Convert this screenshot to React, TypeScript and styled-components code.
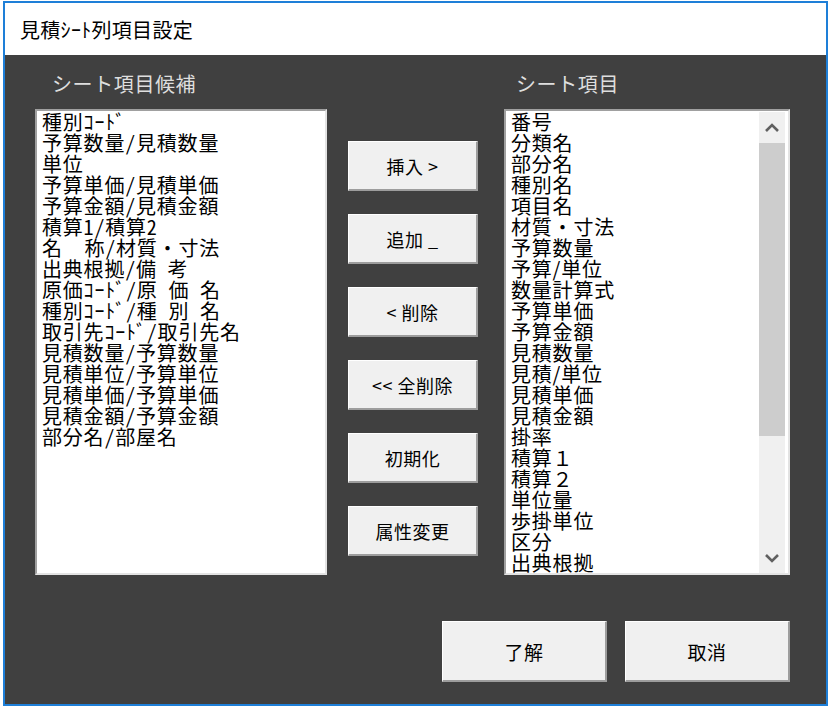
import styled, { createGlobalStyle } from 'styled-components'

const GlobalStyle = createGlobalStyle`
  html, body {
    margin: 0;
    padding: 0;
    background: #ffffff;
  }
  body {
    font-family: "Noto Sans CJK JP", "Noto Sans", sans-serif;
  }
`

const FONT = '"Noto Sans CJK JP", "Noto Sans", sans-serif'

const Window = styled.div`
  box-sizing: border-box;
  width: 825px;
  height: 705px;
  margin: 1px 0 0 3px;
  border: 2px solid #1e7fd8;
  display: flex;
  flex-direction: column;
  background: #404040;
`

const TitleBar = styled.div`
  height: 52px;
  flex: none;
  display: flex;
  align-items: center;
  padding-left: 15px;
  background: #ffffff;
  font-family: ${FONT};
  font-size: 20px;
  color: #000;
  letter-spacing: 0.3px;
`

const Body = styled.div`
  flex: 1;
  display: flex;
  flex-direction: column;
  padding: 14px 35px 0 30px;
`

const LabelRow = styled.div`
  display: flex;
  height: 30px;
  margin-bottom: 10px;
`

const Label = styled.div<{ $width: number; $indent: number }>`
  width: ${(p) => p.$width}px;
  padding-left: ${(p) => p.$indent}px;
  box-sizing: border-box;
  font-family: ${FONT};
  font-size: 20px;
  line-height: 30px;
  color: #dedede;
  letter-spacing: 0.6px;
`

const MainRow = styled.div`
  display: flex;
  height: 466px;
`

const ListBox = styled.div<{ $width: number }>`
  box-sizing: border-box;
  width: ${(p) => p.$width}px;
  height: 100%;
  background: #ffffff;
  border-style: solid;
  border-width: 2px;
  border-color: #a0a0a0 #e3e3e3 #e3e3e3 #a0a0a0;
  display: flex;
  overflow: hidden;
`

const Items = styled.div<{ $pad: number }>`
  flex: 1;
  padding-left: ${(p) => p.$pad}px;
  overflow: hidden;
`

const Item = styled.div<{ $half?: boolean }>`
  font-family: ${FONT};
  font-size: 20px;
  line-height: 21px;
  height: 21px;
  color: #000;
  white-space: pre;
  letter-spacing: 0.8px;
  font-feature-settings: ${(p) => (p.$half ? "'hwid'" : 'normal')};
`

const ScrollBar = styled.div`
  width: 26px;
  margin: 1px 3px 0 0;
  display: flex;
  flex-direction: column;
  background: #f0f0f0;
`

const ScrollArrow = styled.div`
  height: 31px;
  display: flex;
  align-items: center;
  justify-content: center;
  flex: none;
`

const Thumb = styled.div`
  height: 293px;
  background: #cdcdcd;
  flex: none;
`

const Track = styled.div`
  flex: 1;
`

const ButtonColumn = styled.div`
  width: 130px;
  margin: 0 26px 0 21px;
  padding-top: 32px;
  display: flex;
  flex-direction: column;
  gap: 23px;
`

const DlgButton = styled.div<{ $w: number; $h: number; $size: number }>`
  box-sizing: border-box;
  width: ${(p) => p.$w}px;
  height: ${(p) => p.$h}px;
  background: #f0f0f0;
  border-style: solid;
  border-width: 1px 2px 2px 1px;
  border-color: #ffffff #9d9d9d #9d9d9d #ffffff;
  display: flex;
  align-items: center;
  justify-content: center;
  font-family: ${FONT};
  font-size: ${(p) => p.$size}px;
  color: #000;
  white-space: pre;
  letter-spacing: 0.5px;
`

const Footer = styled.div`
  display: flex;
  justify-content: flex-end;
  gap: 18px;
  margin-top: 46px;
  padding-right: 1px;
`

const leftItems = [
  '種別ｺｰﾄﾞ',
  '予算数量/見積数量',
  '単位',
  '予算単価/見積単価',
  '予算金額/見積金額',
  '積算1/積算2',
  '名　　称/材質・寸法',
  '出典根拠/備\u2002考',
  '原価ｺｰﾄﾞ/原\u2002価\u2002名',
  '種別ｺｰﾄﾞ/種\u2002別\u2002名',
  '取引先ｺｰﾄﾞ/取引先名',
  '見積数量/予算数量',
  '見積単位/予算単位',
  '見積単価/予算単価',
  '見積金額/予算金額',
  '部分名/部屋名'
]

const rightItems = [
  '番号',
  '分類名',
  '部分名',
  '種別名',
  '項目名',
  '材質・寸法',
  '予算数量',
  '予算/単位',
  '数量計算式',
  '予算単価',
  '予算金額',
  '見積数量',
  '見積/単位',
  '見積単価',
  '見積金額',
  '掛率',
  '積算１',
  '積算２',
  '単位量',
  '歩掛単位',
  '区分',
  '出典根拠'
]

const actions = ['挿入 >', '追加 _', '< 削除', '<< 全削除', '初期化', '属性変更']

const Chevron: React.FC<{ up?: boolean }> = ({ up }) => (
  <svg width="16" height="10" viewBox="0 0 16 10">
    <polyline
      points={up ? '2,8 8,2 14,8' : '2,2 8,8 14,2'}
      fill="none"
      stroke="#606060"
      strokeWidth="2.6"
    />
  </svg>
)

const App: React.FC = () => {
  return (
    <>
      <GlobalStyle />
      <Window>
        <TitleBar>見積ｼｰﾄ列項目設定</TitleBar>
        <Body>
          <LabelRow>
            <Label $width={469} $indent={17}>シート項目候補</Label>
            <Label $width={286} $indent={12}>シート項目</Label>
          </LabelRow>
          <MainRow>
            <ListBox $width={292}>
              <Items $pad={5}>
                {leftItems.map((t, i) => (
                  <Item key={i} $half>
                    {t}
                  </Item>
                ))}
              </Items>
            </ListBox>
            <ButtonColumn>
              {actions.map((a) => (
                <DlgButton key={a} $w={130} $h={50} $size={18}>
                  {a}
                </DlgButton>
              ))}
            </ButtonColumn>
            <ListBox $width={286}>
              <Items $pad={5}>
                {rightItems.map((t, i) => (
                  <Item key={i}>{t}</Item>
                ))}
              </Items>
              <ScrollBar>
                <ScrollArrow>
                  <Chevron up />
                </ScrollArrow>
                <Thumb />
                <Track />
                <ScrollArrow>
                  <Chevron />
                </ScrollArrow>
              </ScrollBar>
            </ListBox>
          </MainRow>
          <Footer>
            <DlgButton $w={165} $h={61} $size={19}>了解</DlgButton>
            <DlgButton $w={165} $h={61} $size={19}>取消</DlgButton>
          </Footer>
        </Body>
      </Window>
    </>
  )
}

export default App
